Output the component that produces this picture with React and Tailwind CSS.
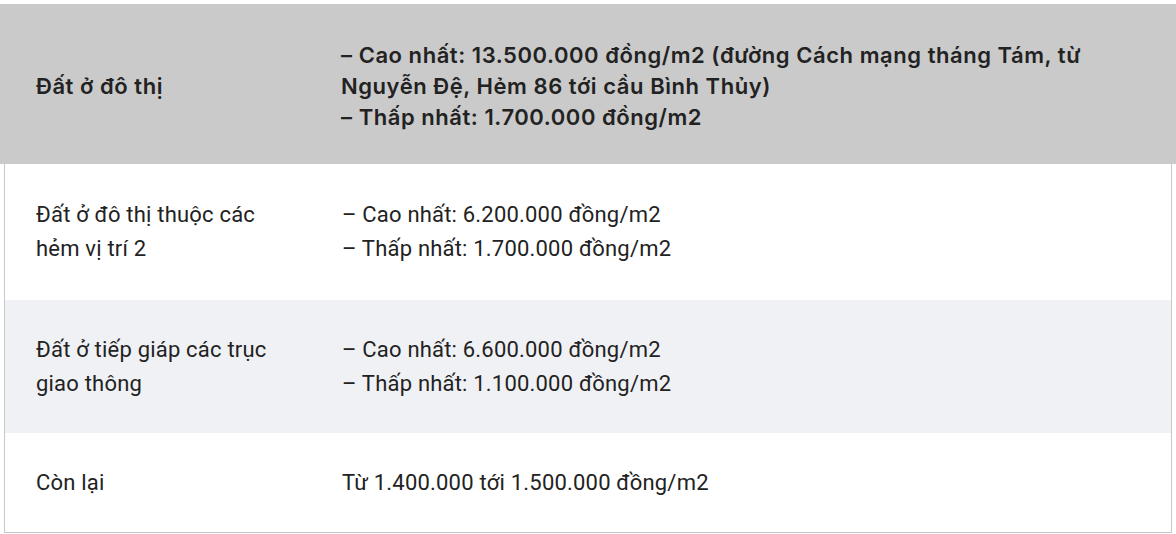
import React from "react";

const rows = [
  {
    label: ["Đất ở đô thị thuộc các", "hẻm vị trí 2"],
    value: ["– Cao nhất: 6.200.000 đồng/m2", "– Thấp nhất: 1.700.000 đồng/m2"],
    bg: "bg-white",
  },
  {
    label: ["Đất ở tiếp giáp các trục", "giao thông"],
    value: ["– Cao nhất: 6.600.000 đồng/m2", "– Thấp nhất: 1.100.000 đồng/m2"],
    bg: "bg-[#f0f1f4]",
  },
  {
    label: ["Còn lại"],
    value: ["Từ 1.400.000 tới 1.500.000 đồng/m2"],
    bg: "bg-white",
  },
];

const App = () => {
  return (
    <div className="w-[1176px] h-[534px] bg-white overflow-hidden pt-[4px]">
      <div
        className="flex bg-[#cacaca] text-[#222] font-semibold text-[22px] leading-[31px] tracking-[0.55px] h-[160px] pt-[4px] items-center"
        style={{ fontFamily: "Inter, 'Noto Sans', sans-serif" }}
      >
        <div className="w-[309px] pl-[36px]">Đất ở đô thị</div>
        <div className="pl-[32px]">
          – Cao nhất: 13.500.000 đồng/m2 (đường Cách mạng tháng Tám, từ
          <br />
          Nguyễn Đệ, Hẻm 86 tới cầu Bình Thủy)
          <br />
          – Thấp nhất: 1.700.000 đồng/m2
        </div>
      </div>
      <div
        className="mx-[4px] border-x border-b border-[#c8c8c8] text-[#222] text-[22px] leading-[34px] tracking-[0.2px]"
        style={{ fontFamily: "Roboto, 'Liberation Sans', sans-serif" }}
      >
        {rows.map((row, i) => (
          <div
            key={i}
            className={`flex items-center py-[33px] ${row.bg} ${i === 1 ? "h-[133px]" : i === 2 ? "h-[99px]" : "h-[136px]"}`}
          >
            <div className="w-[305px] pl-[31px]">
              {row.label.map((l, k) => (
                <div key={k}>{l}</div>
              ))}
            </div>
            <div className="pl-[32px]">
              {row.value.map((v, k) => (
                <div key={k}>{v}</div>
              ))}
            </div>
          </div>
        ))}
      </div>
    </div>
  );
};

export default App;
